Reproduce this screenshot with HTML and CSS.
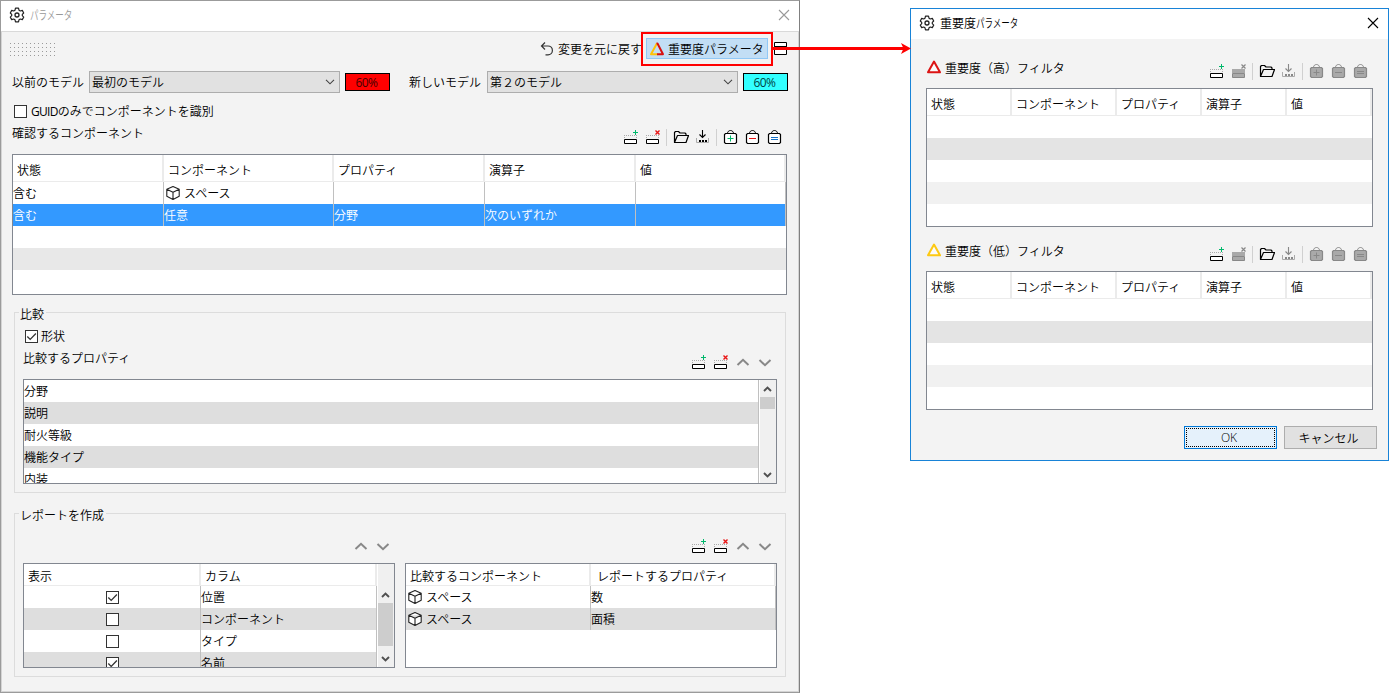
FILE: index.html
```html
<!DOCTYPE html>
<html lang="ja">
<head>
  <meta charset="UTF-8" />
  <meta name="viewport" content="width=device-width, initial-scale=1" />
  <title>パラメータ</title>
  <link rel="stylesheet" href="styles.css">
</head>
<body>
  <!-- Icon sprite -->
  <svg class="sprite" aria-hidden="true">
    <symbol id="i-gear" viewBox="0 0 16 16">
      <path d="M6.5 1.2h3l.5 2 1.3.8 2-.6 1.4 2.6L13.300 7.400v1.300l1.400 1.400-1.400 2.500-2-.600-1.300.800-.500 2h-3l-.500-2-1.300-.800-2 .600L1.300 10.100l1.400-1.400V7.400L1.300 6l1.400-2.600 2 .6 1.300-.8z" fill="none" stroke="#222" stroke-width="1.200" stroke-linejoin="round"/>
      <circle cx="8" cy="8" r="2" fill="none" stroke="#222" stroke-width="1.300"/>
    </symbol>
    <symbol id="i-close" viewBox="0 0 12 12"><path d="M1 1l10 10M11 1L1 11" stroke="currentColor" fill="none" stroke-width="1.100"/></symbol>
    <symbol id="i-undo" viewBox="0 0 16 16"><path d="M6 1.500L2.500 5L6 8.500M2.500 5h6.500a4.400 4.400 0 0 1 0 8.800H6.500" fill="none" stroke="#333" stroke-width="1.200"/></symbol>
    <symbol id="i-window" viewBox="0 0 15 14"><path d="M1.500 .5h12v4h-12zM1.500 4.500h12v8h-12z" fill="#fff" stroke="#000"/></symbol>
    <symbol id="i-tri" viewBox="0 0 16 16"><path d="M8 2.500L14 13.300H2z" fill="#fbfbfb" stroke="currentColor" stroke-width="2" stroke-linejoin="round"/></symbol>
    <symbol id="i-tri2" viewBox="0 0 16 16">
      <path d="M8.500 13.200H2L8 2.300" fill="none" stroke="#ffc20a" stroke-width="2" stroke-linejoin="round"/>
      <path d="M7.500 2.500h1l5.500 10.700H8" fill="none" stroke="#d81010" stroke-width="2" stroke-linejoin="round"/>
    </symbol>
    <symbol id="i-add" viewBox="0 0 16 16">
      <path d="M1 6.500h13M1.500 8v1M13.500 8v1" stroke="#aaa" stroke-dasharray="1 1" fill="none"/>
      <path d="M1.500 10.500h12v4h-12z" fill="#fff" stroke="#000"/>
      <path d="M12.500 1v5M10 3.500h5" stroke="#00b86b"/>
    </symbol>
    <symbol id="i-del" viewBox="0 0 16 16">
      <path d="M1 6.500h13M1.500 8v1M13.500 8v1" stroke="#aaa" stroke-dasharray="1 1" fill="none"/>
      <path d="M1.500 10.500h12v4h-12z" fill="#fff" stroke="#000"/>
      <path d="M10.500 1.500l4 4M14.500 1.500l-4 4" stroke="#e81414" stroke-width="1.400"/>
    </symbol>
    <symbol id="i-del-off" viewBox="0 0 16 16">
      <path d="M1 6h13v4H1z" fill="#a9a9a9"/>
      <path d="M1.500 10.500h12v4h-12z" fill="#a9a9a9" stroke="#888"/>
      <path d="M10.500 1.500l4 4M14.500 1.500l-4 4" stroke="#888" stroke-width="1.200"/>
    </symbol>
    <symbol id="i-folder" viewBox="0 0 16 16"><path d="M1.500 13.500v-10l1-1h3l1.500 1.500h5l1 1v1.500M1.500 13.500l3-7h11l-2.500 7z" fill="none" stroke="#000" stroke-width="1.200" stroke-linejoin="round"/></symbol>
    <symbol id="i-load" viewBox="0 0 16 16">
      <path d="M1.500 9v4.500h12V9" fill="none" stroke="#aaa"/>
      <path d="M7.500 1v7.500M4.500 5.500l3 3 3-3" fill="none" stroke="currentColor" stroke-width="1.100"/>
      <path d="M4 11h2v2H4zM7 11h2v2H7zM10 11h2v2h-2z" fill="currentColor"/>
    </symbol>
    <symbol id="i-bag" viewBox="0 0 16 16">
      <path d="M4.500 4.500c0-4 6-4 6 0" fill="none" stroke="currentColor"/>
      <path d="M2.500 4.500h10l1 1v8l-1 1h-10l-1-1v-8z" fill="var(--bag)" stroke="currentColor" stroke-width="1.200"/>
    </symbol>
    <symbol id="i-up" viewBox="0 0 16 16"><path d="M2.500 11L8 5.800 13.500 11" fill="none" stroke="#888" stroke-width="2"/></symbol>
    <symbol id="i-down" viewBox="0 0 16 16"><path d="M2.500 6L8 11.200 13.500 6" fill="none" stroke="#888" stroke-width="2"/></symbol>
    <symbol id="i-caret" viewBox="0 0 10 6"><path d="M1 .8l4 4 4-4" fill="none" stroke="#444" stroke-width="1.100"/></symbol>
    <symbol id="i-sup" viewBox="0 0 9 6"><path d="M1 5l3.500-3.500L8 5" fill="none" stroke="#505050" stroke-width="1.900"/></symbol>
    <symbol id="i-sdown" viewBox="0 0 9 6"><path d="M1 1l3.500 3.500L8 1" fill="none" stroke="#505050" stroke-width="1.900"/></symbol>
    <symbol id="i-cube" viewBox="0 0 16 16"><path d="M8 1.500l6.200 2.800v7L8 14.500l-6.200-3.200v-7zM1.800 4.300L8 7.300l6.200-3M8 7.300v7.200" fill="#fff" stroke="#222" stroke-width="1.100" stroke-linejoin="round"/></symbol>
    <symbol id="i-check" viewBox="0 0 11 11"><path d="M1.300 5.500l2.900 2.900 5.700-5.900" fill="none" stroke="#333" stroke-width="1.300"/></symbol>
  </svg>

  <div class="desktop">
    <section class="dialog main-dialog">
      <header class="titlebar">
        <svg class="icon"><use href="#i-gear"/></svg>
        <h1 class="muted"><span class="narrow">パラメータ</span></h1>
        <svg class="close muted"><use href="#i-close"/></svg>
      </header>

      <div class="toolbar">
        <span class="grip"></span>
        <svg class="icon"><use href="#i-undo"/></svg>
        <span class="undo-text">変更を元に戻す</span>
        <div class="callout">
          <button class="tool-btn"><svg class="icon"><use href="#i-tri2"/></svg>重要度パラメータ</button>
        </div>
        <svg class="win-icon"><use href="#i-window"/></svg>
      </div>

      <div class="content">
        <div class="models">
          <label>以前のモデル</label>
          <div class="select">最初のモデル<svg><use href="#i-caret"/></svg></div>
          <span class="swatch red">60%</span>
          <label class="second">新しいモデル</label>
          <div class="select">第２のモデル<svg><use href="#i-caret"/></svg></div>
          <span class="swatch cyan">60%</span>
        </div>

        <div class="check-row guid"><span class="check"></span><span><span class="latin">GUID</span>のみでコンポーネントを識別</span></div>

        <div class="bar">
          <span class="bar-label">確認するコンポーネント</span>
          <div class="icons">
            <svg class="icon"><use href="#i-add"/></svg>
            <svg class="icon"><use href="#i-del"/></svg>
            <i class="sep"></i>
            <svg class="icon"><use href="#i-folder"/></svg>
            <svg class="icon"><use href="#i-load"/></svg>
            <i class="sep"></i>
            <svg class="icon"><use href="#i-bag"/><path d="M7.500 6.500v6M4.500 9.500h6" stroke="#00b86b"/></svg>
            <svg class="icon"><use href="#i-bag"/><path d="M4 9.500h7" stroke="#e81414"/></svg>
            <svg class="icon"><use href="#i-bag"/><path d="M4 8.500h7M4 10.500h7" stroke="#1470c8"/></svg>
          </div>
        </div>

        <div class="grid components">
          <div class="row head"><span>状態</span><span>コンポーネント</span><span>プロパティ</span><span>演算子</span><span>値</span></div>
          <div class="row"><span>含む</span><span><svg class="icon"><use href="#i-cube"/></svg>スペース</span><span></span><span></span><span></span></div>
          <div class="row selected"><span>含む</span><span>任意</span><span>分野</span><span>次のいずれか</span><span></span></div>
          <div class="row empty"></div>
          <div class="row empty gray"></div>
          <div class="row empty"></div>
        </div>

        <fieldset class="compare">
          <legend>比較</legend>
          <div class="check-row"><span class="check"><svg><use href="#i-check"/></svg></span>形状</div>
          <div class="bar">
            <span class="bar-label">比較するプロパティ</span>
            <div class="icons">
              <svg class="icon"><use href="#i-add"/></svg>
              <svg class="icon"><use href="#i-del"/></svg>
              <svg class="icon"><use href="#i-up"/></svg>
              <svg class="icon"><use href="#i-down"/></svg>
            </div>
          </div>
          <div class="grid list">
            <div class="rows">
              <div class="row"><span>分野</span></div>
              <div class="row"><span>説明</span></div>
              <div class="row"><span>耐火等級</span></div>
              <div class="row"><span>機能タイプ</span></div>
              <div class="row"><span>内装</span></div>
            </div>
            <div class="scroll">
              <svg><use href="#i-sup"/></svg>
              <div class="track"><div class="thumb"></div></div>
              <svg><use href="#i-sdown"/></svg>
            </div>
          </div>
        </fieldset>

        <fieldset class="report">
          <legend>レポートを作成</legend>
          <div class="columns">
            <div class="column">
              <div class="icons">
                <svg class="icon"><use href="#i-up"/></svg>
                <svg class="icon"><use href="#i-down"/></svg>
              </div>
              <div class="grid list shown">
                <div class="rows">
                  <div class="row head"><span>表示</span><span>カラム</span></div>
                  <div class="row"><span><i class="check"><svg><use href="#i-check"/></svg></i></span><span>位置</span></div>
                  <div class="row"><span><i class="check"></i></span><span>コンポーネント</span></div>
                  <div class="row"><span><i class="check"></i></span><span>タイプ</span></div>
                  <div class="row"><span><i class="check"><svg><use href="#i-check"/></svg></i></span><span>名前</span></div>
                </div>
                <div class="scroll">
                  <svg><use href="#i-sup"/></svg>
                  <div class="track"><div class="thumb"></div></div>
                  <svg><use href="#i-sdown"/></svg>
                </div>
              </div>
            </div>
            <div class="column">
              <div class="icons">
                <svg class="icon"><use href="#i-add"/></svg>
                <svg class="icon"><use href="#i-del"/></svg>
                <svg class="icon"><use href="#i-up"/></svg>
                <svg class="icon"><use href="#i-down"/></svg>
              </div>
              <div class="grid list props">
                <div class="rows">
                  <div class="row head"><span>比較するコンポーネント</span><span>レポートするプロパティ</span></div>
                  <div class="row"><span><svg class="icon"><use href="#i-cube"/></svg>スペース</span><span>数</span></div>
                  <div class="row"><span><svg class="icon"><use href="#i-cube"/></svg>スペース</span><span>面積</span></div>
                </div>
              </div>
            </div>
          </div>
        </fieldset>
      </div>
    </section>

    <svg class="arrow" viewBox="0 0 140 12"><path d="M0 6.500h134" stroke="#f00" stroke-width="3"/><path d="M130 1L140 6.500l-10 5.500 2.500-5.500z" fill="#f00"/></svg>

    <section class="dialog sub-dialog">
      <header class="titlebar">
        <svg class="icon"><use href="#i-gear"/></svg>
        <h1>重要度<span class="narrow">パラメータ</span></h1>
        <svg class="close"><use href="#i-close"/></svg>
      </header>

      <div class="content">
        <div class="bar">
          <span class="bar-label"><svg class="icon high"><use href="#i-tri"/></svg>重要度（高）フィルタ</span>
          <div class="icons">
            <svg class="icon"><use href="#i-add"/></svg>
            <svg class="icon"><use href="#i-del-off"/></svg>
            <i class="sep"></i>
            <svg class="icon"><use href="#i-folder"/></svg>
            <svg class="icon off"><use href="#i-load"/></svg>
            <i class="sep"></i>
            <svg class="icon off"><use href="#i-bag"/><path d="M7.500 6.500v6M4.500 9.500h6" stroke="#888"/></svg>
            <svg class="icon off"><use href="#i-bag"/><path d="M4 9.500h7" stroke="#888"/></svg>
            <svg class="icon off"><use href="#i-bag"/><path d="M4 8.500h7M4 10.500h7" stroke="#888"/></svg>
          </div>
        </div>
        <div class="grid filter">
          <div class="row head"><span>状態</span><span>コンポーネント</span><span>プロパティ</span><span>演算子</span><span>値</span></div>
          <div class="row empty"></div>
          <div class="row empty dark"></div>
          <div class="row empty"></div>
          <div class="row empty light"></div>
          <div class="row empty"></div>
        </div>

        <div class="bar">
          <span class="bar-label"><svg class="icon low"><use href="#i-tri"/></svg>重要度（低）フィルタ</span>
          <div class="icons">
            <svg class="icon"><use href="#i-add"/></svg>
            <svg class="icon"><use href="#i-del-off"/></svg>
            <i class="sep"></i>
            <svg class="icon"><use href="#i-folder"/></svg>
            <svg class="icon off"><use href="#i-load"/></svg>
            <i class="sep"></i>
            <svg class="icon off"><use href="#i-bag"/><path d="M7.500 6.500v6M4.500 9.500h6" stroke="#888"/></svg>
            <svg class="icon off"><use href="#i-bag"/><path d="M4 9.500h7" stroke="#888"/></svg>
            <svg class="icon off"><use href="#i-bag"/><path d="M4 8.500h7M4 10.500h7" stroke="#888"/></svg>
          </div>
        </div>
        <div class="grid filter">
          <div class="row head"><span>状態</span><span>コンポーネント</span><span>プロパティ</span><span>演算子</span><span>値</span></div>
          <div class="row empty"></div>
          <div class="row empty dark"></div>
          <div class="row empty"></div>
          <div class="row empty light"></div>
          <div class="row empty"></div>
        </div>

        <div class="actions">
          <button class="btn primary"><span>OK</span></button>
          <button class="btn">キャンセル</button>
        </div>
      </div>
    </section>
  </div>
</body>
</html>
```
FILE: styles.css
```css
* { box-sizing: border-box; }
body {
  margin: 0;
  background: #fff;
  color: #000;
  font: 350 12px/18px "Noto Sans CJK JP", sans-serif;
  overflow: hidden;
}
.sprite { position: absolute; width: 0; height: 0; }
.desktop {
  position: relative;
  display: flex;
  align-items: flex-start;
  width: 1393px;
  height: 693px;
}
.dialog { background: #f3f3f3; flex: none; }
.main-dialog {
  width: 800px;
  height: 693px;
  border: 1px solid #9b9b9b;
  border-right-color: #808080;
  box-shadow: inset 0 0 0 1px #d4d4d4;
}
.sub-dialog {
  width: 479px;
  height: 453px;
  margin: 8px 0 0 110px;
  border: 1px solid #1883d7;
}
.icon {
  flex: none;
  display: block;
  width: 16px;
  height: 16px;
  --bag: #fff;
}
.icon.off { color: #888; --bag: #a9a9a9; }
.high { color: #dc1414; }
.low { color: #fdc913; }

/* Title bar */
.titlebar {
  display: flex;
  align-items: center;
  height: 31px;
  padding: 0 9px 2px 8px;
  background: #fff;
  border-bottom: 1px solid #d9d9d9;
}
.sub-dialog .titlebar {
  height: 30px;
  padding: 0 9px 2px 8px;
  border-bottom: none;
}
.titlebar h1 {
  flex: 1;
  margin: 0 0 0 5px;
  font-size: 12px;
  font-weight: 350;
  white-space: nowrap;
}
.titlebar h1.muted { color: #999; }
.narrow {
  display: inline-block;
  transform: scaleX(.71);
  transform-origin: left;
}
.close { width: 12px; height: 12px; }
.close.muted { color: #999; }

/* Toolbar */
.toolbar {
  display: flex;
  align-items: center;
  height: 34px;
  padding: 0 11px 0 8px;
}
.grip {
  width: 48px;
  height: 15px;
  margin-right: auto;
  background: radial-gradient(circle at 1.5px 1.5px, #9a9a9a 0.8px, transparent 1px) 0 0 / 4px 4px;
}
.undo-text { margin-left: 3px; }
.callout {
  width: 132px;
  height: 34px;
  margin-left: -1px;
  padding: 4px 3px;
  border: 2px solid #f00;
}
.tool-btn {
  display: flex;
  align-items: center;
  gap: 3px;
  width: 122px;
  height: 21px;
  padding: 0 0 0 2px;
  border: 1px solid #90c8f6;
  background: #c2def5;
  font: inherit;
  color: inherit;
  white-space: nowrap;
}
.win-icon { width: 15px; height: 14px; }
.arrow {
  position: absolute;
  left: 771px;
  top: 42px;
  width: 140px;
  height: 12px;
}

/* Main content */
.main-dialog .content { padding: 5px 12px 0 11px; }
.models {
  display: flex;
  align-items: center;
  height: 22px;
  margin-right: -1px;
}
.models label { width: 77px; }
.models .second { width: 78px; margin-left: 19px; }
.select {
  display: flex;
  align-items: center;
  justify-content: space-between;
  width: 251px;
  height: 22px;
  padding: 0 4px 0 2px;
  border: 1px solid #adadad;
  background: #e1e1e1;
}
.select svg { width: 10px; height: 6px; }
.swatch {
  width: 45px;
  height: 18px;
  margin-left: 5px;
  padding-right: 2px;
  border: 1px solid #000;
  font: 12px/17px "Open Sans", sans-serif;
  letter-spacing: -.6px;
  text-align: center;
}
.red { background: #f00; color: #400; }
.cyan { background: #3ff; color: #044; }
.latin { font: 12px "Open Sans", sans-serif; letter-spacing: -.7px; }
.check-row {
  display: flex;
  align-items: center;
  gap: 4px;
  height: 18px;
  margin: 6px 0 0 2px;
}
.check-row.guid { margin-top: 9px; }
.check {
  display: block;
  width: 13px;
  height: 13px;
  border: 1px solid #333;
  background: #fff;
}
.check svg { display: block; width: 11px; height: 11px; }
.bar {
  display: flex;
  justify-content: space-between;
  height: 34px;
}
.bar-label { display: flex; margin-top: 4px; }
.icons {
  display: flex;
  justify-content: flex-end;
  gap: 6px;
  margin-top: 9px;
  padding-right: 4px;
}
.sep {
  width: 1px;
  height: 17px;
  margin: 0 0 0 -1px;
  background: #d0d0d0;
}

/* Tables */
.grid { border: 1px solid #828790; background: #fff; overflow: hidden; }
.row { display: grid; height: 22px; }
.row > span {
  display: flex;
  align-items: center;
  border-right: 1px solid #c0c0c0;
  white-space: nowrap;
}
.row.head { height: 27px; border-bottom: 1px solid #ebebeb; }
.row.head > span {
  padding: 3px 0 0 4px;
  border-right: 2px solid #ebebeb;
}
.row .icon { margin: -1px 3px 0 1px; }
.components { height: 141px; }
.components .row { grid-template-columns: 151px 170px 151px 151px 150px; }
.row.selected { background: #3399ff; color: #fff; }
.gray { background: #e8e8e8; }
.dark { background: #e4e4e4; }
.light { background: #f1f1f1; }

/* Group boxes */
fieldset {
  min-width: 0;
  margin: 9px 1px 0 2px;
  padding: 0 8px;
  border: 1px solid #dcdcdc;
}
legend {
  height: 17px;
  margin-left: -4px;
  padding: 3px 2px 0 1px;
  line-height: 14px;
}
.compare { height: 189px; }
.compare .check-row { gap: 3px; }
.compare .bar-label { margin-top: 4px; }
.report { height: 172px; margin-top: 12px; }
.list { display: flex; height: 105px; }
.list .rows { flex: 1; }
.list .row:nth-child(even) { background: #dedede; }
.columns { display: flex; gap: 10px; }
.column { flex: none; width: 372px; }
.column .icons { height: 25px; margin-top: 16px; }
.column:last-child .row.head > span:last-child { padding-left: 6px; }
.column .row.head { height: 22px; }
.column .row.head > span { padding-top: 2px; }
.shown .row { grid-template-columns: 177px 176px; }
.shown .row:nth-child(even), .props .row:nth-child(even) { background: #fff; }
.shown .row:nth-child(2n+3), .props .row:nth-child(2n+3) { background: #dedede; }
.shown .row:not(.head) > span:first-child { justify-content: center; padding-top: 1px; }
.props .row { grid-template-columns: 185px 185px; }

.scroll {
  display: flex;
  flex-direction: column;
  align-items: center;
  width: 17px;
  padding: 6px 1px 5px 0;
  border-left: 1px solid #fff;
  background: #f0f0f0;
}
.scroll svg { width: 9px; height: 6px; flex: none; }
.track { flex: 1; width: 15px; padding-top: 5px; }
.thumb { height: 12px; background: #cdcdcd; }
.shown .scroll { padding-top: 28px; }
.shown .thumb { height: 43px; }

/* Severity dialog */
.sub-dialog .content { padding: 10px 15px 0; }
.sub-dialog .bar { height: 39px; }
.sub-dialog .bar + .grid + .bar { height: 44px; padding-top: 5px; }
.sub-dialog .bar-label { gap: 3px; margin-top: 10px; }
.sub-dialog .icons { margin-top: 14px; }
.filter { height: 139px; }
.filter .row { grid-template-columns: 85px 105px 85px 85px 85px; }
.actions {
  display: flex;
  gap: 7px;
  justify-content: flex-end;
  margin: 16px -4px 0 0;
}
.btn {
  width: 93px;
  height: 23px;
  padding: 0 4px 0 0;
  border: 1px solid #adadad;
  background: #e1e1e1;
  color: #000;
  font: inherit;
}
.btn.primary {
  padding: 1px;
  border-color: #0078d7;
  background: #e5f1fb;
  font-family: "Open Sans", sans-serif;
}
.btn.primary span {
  display: block;
  height: 19px;
  padding-right: 3px;
  border: 1px dotted #000;
  line-height: 17px;
}
```
